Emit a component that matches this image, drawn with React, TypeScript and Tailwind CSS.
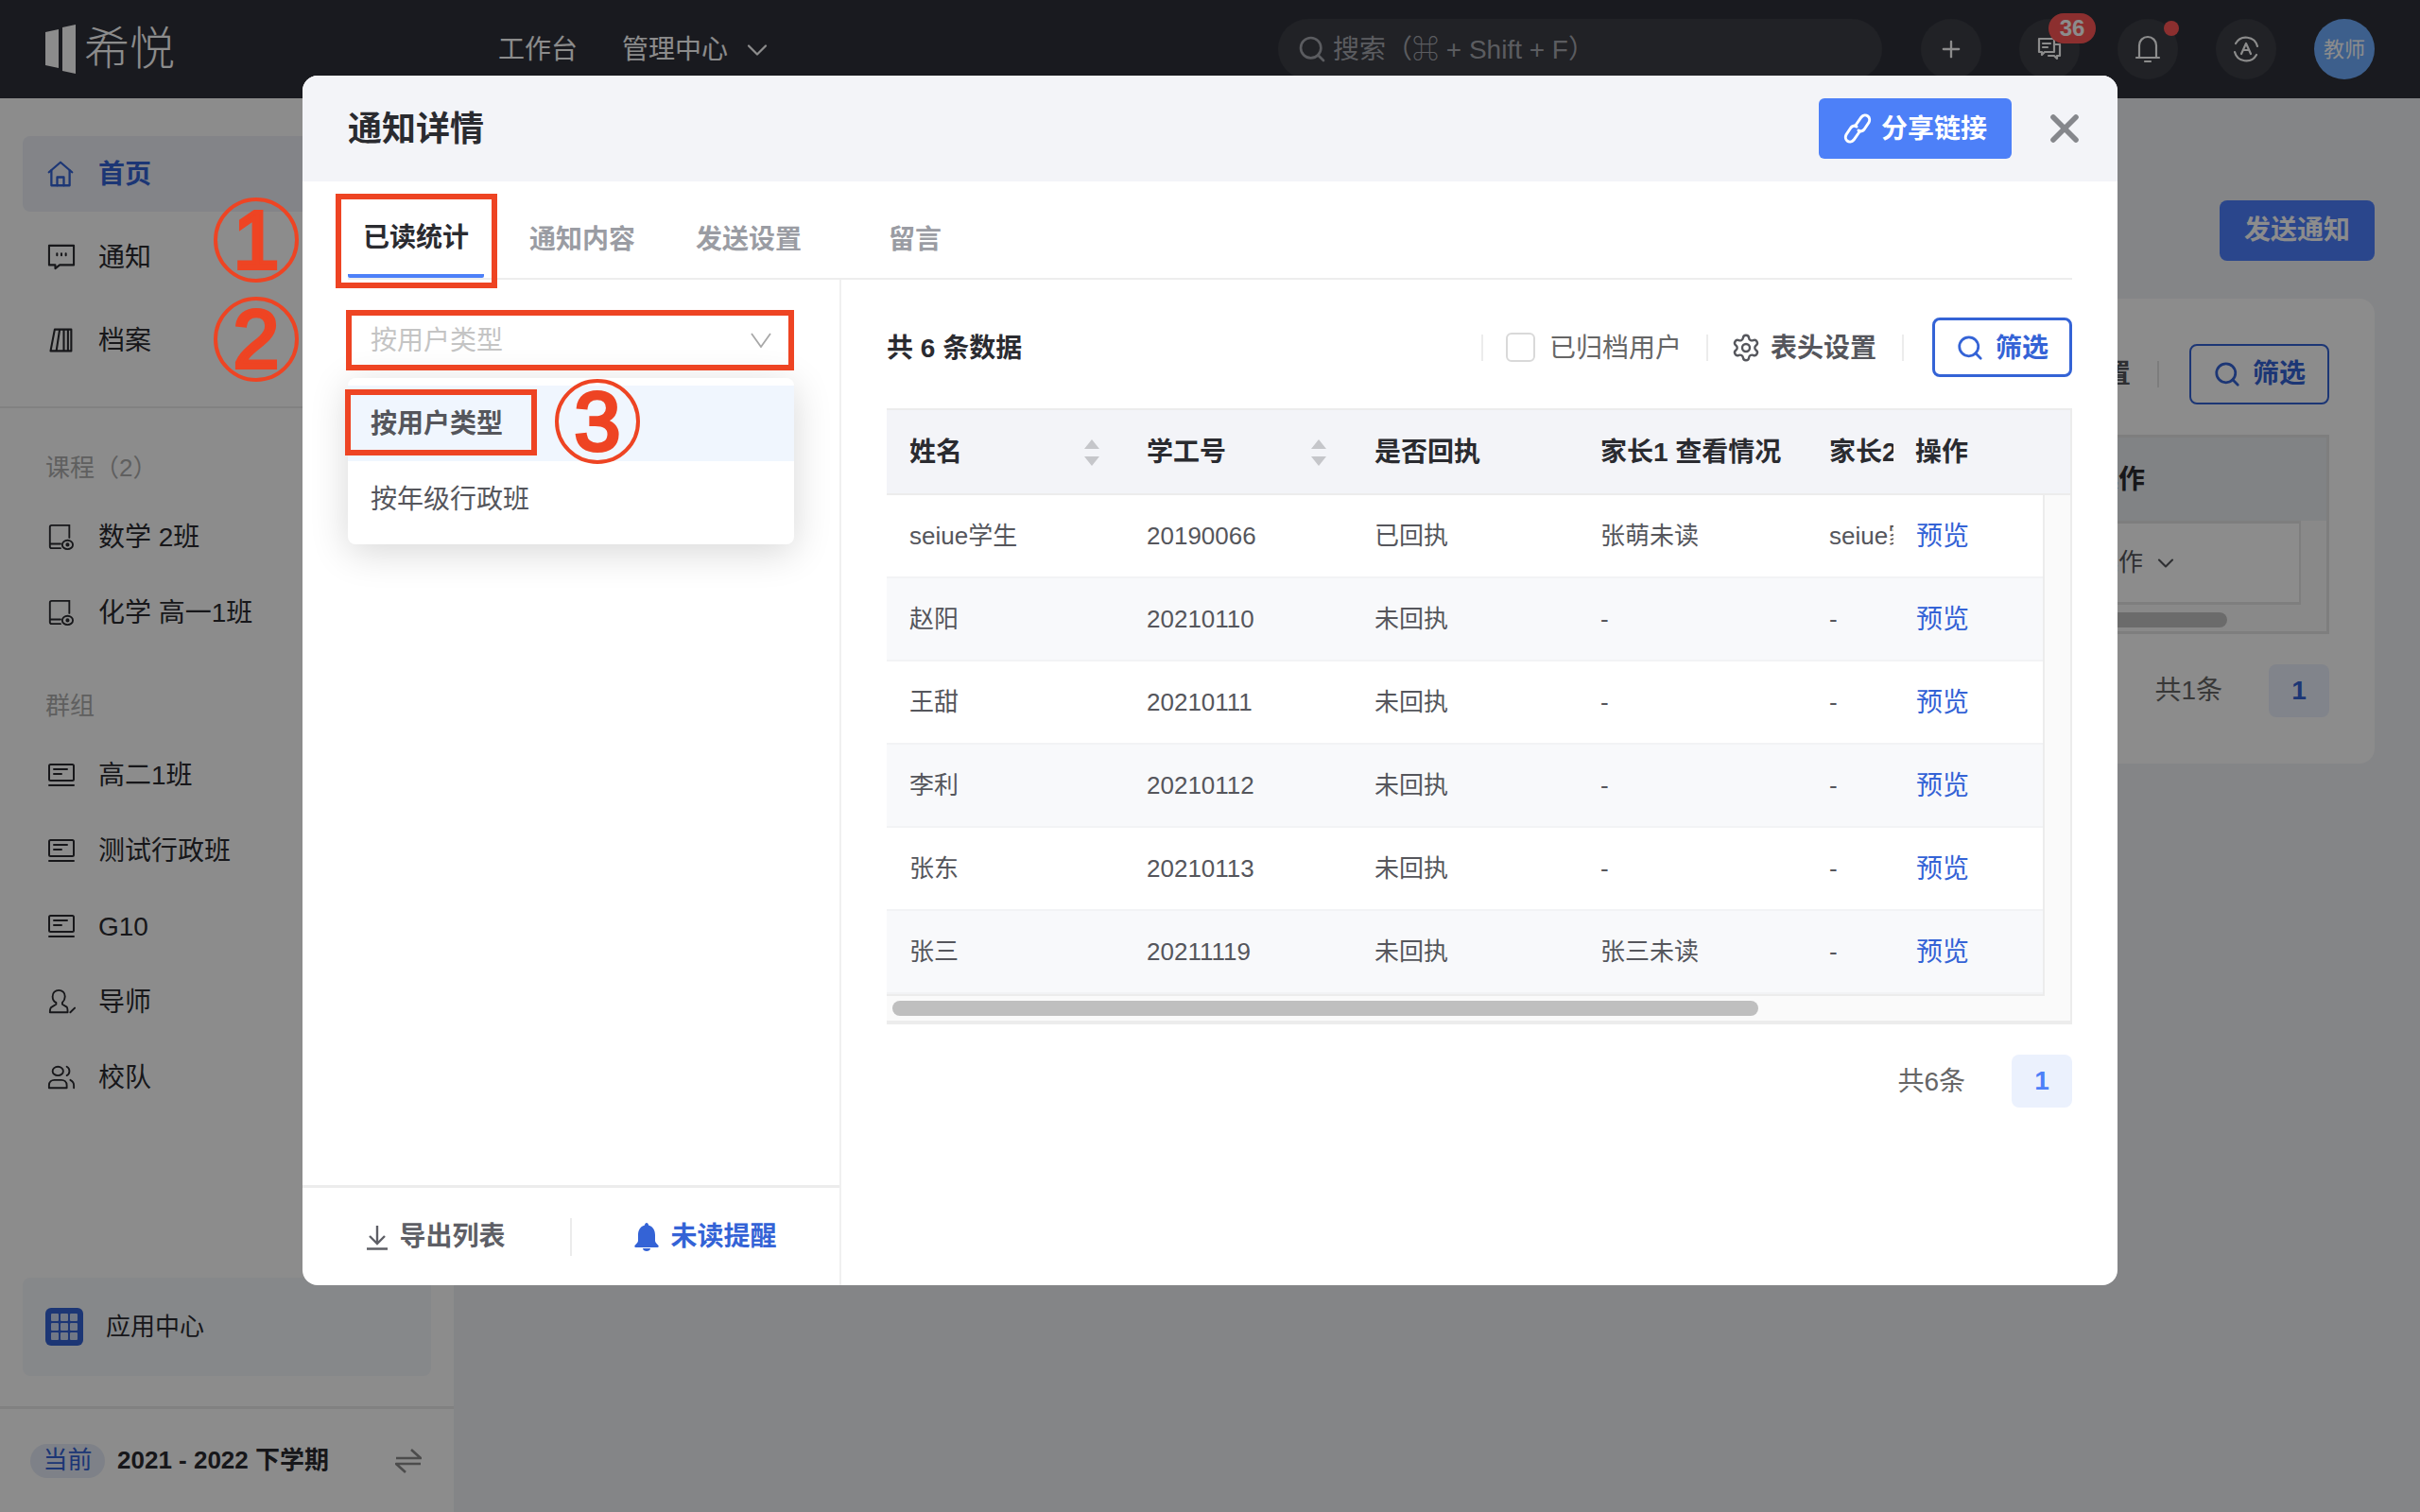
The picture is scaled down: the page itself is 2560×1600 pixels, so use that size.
import React from "react";
import { ChevronDown, Plus, Search, Settings, X } from "lucide-react";

const HomeIcon = () => (
  <svg width="28" height="28" viewBox="0 0 32 32" fill="none" stroke="#3463d6" strokeWidth="2.6" strokeLinejoin="round" strokeLinecap="round">
    <path d="M2 14 16 2l14 12" />
    <path d="M5 12v18h22V12" />
    <path d="M12 30V20h8v10" />
  </svg>
);

const ChatIcon = () => (
  <svg width="30" height="28" viewBox="0 0 32 30" fill="none" stroke="#2a2b30" strokeWidth="2.2" strokeLinejoin="round" strokeLinecap="round">
    <path d="M2 2h28v22H14l-5 4v-4H2z" />
    <path d="M11 11v2M16 11v2M21 11v2" />
  </svg>
);

const ArchiveIcon = () => (
  <svg width="28" height="28" viewBox="0 0 32 32" fill="none" stroke="#2a2b30" strokeWidth="2.4" strokeLinejoin="round">
    <path d="M9 3h20v26H4z" />
    <path d="M15 3l-4 26M20 3v26M25 3v26" />
  </svg>
);

const CourseIcon = () => (
  <svg width="28" height="30" viewBox="0 0 30 32" fill="none" stroke="#2a2b30" strokeWidth="2" strokeLinecap="round">
    <path d="M25 17V3H5a2 2 0 0 0-2 2v22a2 2 0 0 0 2 2h10M3 24h12" />
    <ellipse cx="23" cy="25" rx="6" ry="5" />
    <circle cx="23" cy="25" r="1.2" />
  </svg>
);

const GroupIcon = () => (
  <svg width="30" height="26" viewBox="0 0 30 26" fill="none" stroke="#2a2b30" strokeWidth="2" strokeLinecap="round">
    <rect x="2" y="2" width="26" height="17" rx="1.5" />
    <path d="M7 7h14M7 12h8M2 24h26" />
  </svg>
);

const MentorIcon = () => (
  <svg width="30" height="30" viewBox="0 0 32 32" fill="none" stroke="#2a2b30" strokeWidth="2" strokeLinecap="round" strokeLinejoin="round">
    <path d="M13 3c4 0 7 3 7 7 0 4-2 6-3 7v2l5 3c1 1 1 3 1 6H3c0-3 0-5 2-6l5-3v-2c-2-1-4-3-4-7s3-7 7-7z" />
    <path d="m26 28 5-5" />
  </svg>
);

const TeamIcon = () => (
  <svg width="30" height="30" viewBox="0 0 32 32" fill="none" stroke="#2a2b30" strokeWidth="2" strokeLinecap="round" strokeLinejoin="round">
    <ellipse cx="12" cy="9" rx="6" ry="5" />
    <path d="M2 28v-3c0-4 3-6 6-6h8c3 0 6 2 6 6v3z" />
    <path d="M22 4c2 1 3 3 3 5s-1 4-3 5M26 19c2 1 4 3 4 6v3" />
  </svg>
);

const MsgIcon = () => (
  <svg width="28" height="28" viewBox="0 0 28 28" fill="none" stroke="#fff" strokeWidth="2.2" strokeLinejoin="round" strokeLinecap="round">
    <path d="M3 3h16v14H9l-3 3v-3H3z" />
    <path d="M19 9h6v12h-3v3l-3-3h-6" />
    <path d="M7 8h8M7 12h5" />
  </svg>
);

const BellIcon = () => (
  <svg width="28" height="32" viewBox="0 0 28 32" fill="none" stroke="#fff" strokeWidth="2.2" strokeLinejoin="round" strokeLinecap="round">
    <path d="M5 25V12c0-5 4-9 9-9s9 4 9 9v13" />
    <path d="M2 25h24M11 29h6" />
  </svg>
);

const LangIcon = () => (
  <svg width="30" height="30" viewBox="0 0 30 30" fill="none" stroke="#fff" strokeWidth="2.2" strokeLinejoin="round" strokeLinecap="round">
    <path d="M4 9A12.500 12.500 0 0 1 27 12" />
    <path d="M26 21A12.500 12.500 0 0 1 3 18" />
    <path d="m10 20 5-11 5 11M12 16h6" />
  </svg>
);

const LinkIcon = () => (
  <svg width="30" height="34" viewBox="0 0 30 34" fill="none" stroke="#fff" strokeWidth="3" strokeLinecap="round">
    <path d="M13 13.500 19 5c2-2.500 5-2.500 7-1s2 4.500 1 6.500l-5 7.500c-1.500 2-4 2.500-6 1" />
    <path d="M17 20.500 11 29c-2 2.500-5 2.500-7 1s-2-4.500-1-6.500l5-7.500c1.500-2 4-2.500 6-1" />
  </svg>
);

const SolidBell = () => (
  <svg width="26" height="30" viewBox="0 0 26 30" fill="#3463d6">
    <path d="M13 0c1 0 2 1 2 2.500C20 4 22 8 22 13v6c0 2 2 3 3.500 5 .5 1 0 2-1 2h-23c-1 0-1.500-1-1-2C2 22 4 21 4 19v-6c0-5 2-9 7-10.500C11 1 12 0 13 0z" />
    <path d="M9 27h8c0 2-2 3-4 3s-4-1-4-3z" />
  </svg>
);

const DownloadIcon = () => (
  <svg width="22" height="28" viewBox="0 0 22 28" fill="none" stroke="#5e5f66" strokeWidth="2.4">
    <path d="M11 2v18M3 13l8 8 8-8M0 26.500h22" />
  </svg>
);

const SwapIcon = () => (
  <svg width="28" height="28" viewBox="0 0 28 28" fill="none" stroke="#8a8a8a" strokeWidth="2.6" strokeLinejoin="round">
    <path d="M1 11h26L17 2M27 17H1l10 9" />
  </svg>
);

const SortIcon = () => (
  <svg width="16" height="28" viewBox="0 0 16 28" fill="#c5c6ca">
    <path d="M8 0l8 10H0zM8 28 0 18h16z" />
  </svg>
);

const AppsIcon = () => (
  <div className="grid h-[40px] w-[40px] grid-cols-3 gap-[2px] rounded-[6px] bg-[#3463d6] p-[6px]">
    {Array.from({ length: 9 }).map((_, i) => (
      <span key={i} className="rounded-[1px] bg-[#f5f7fb] opacity-80" />
    ))}
  </div>
);

const NavItem = ({ icon, label, active }: { icon: React.ReactNode; label: string; active?: boolean }) => (
  <div className={`flex h-[80px] items-center rounded-[8px] pl-[24px] text-[28px] ${active ? "bg-[#eef1f8] font-semibold text-[#3463d6]" : "text-[#2a2b30]"}`}>
    <span className="flex w-[56px] items-center pl-[2px]">{icon}</span>
    <span className="pt-[2px]">{label}</span>
  </div>
);

const rows = [
  ["seiue学生", "20190066", "已回执", "张萌未读", "seiue家长"],
  ["赵阳", "20210110", "未回执", "-", "-"],
  ["王甜", "20210111", "未回执", "-", "-"],
  ["李利", "20210112", "未回执", "-", "-"],
  ["张东", "20210113", "未回执", "-", "-"],
  ["张三", "20211119", "未回执", "张三未读", "-"],
];

const Circled = ({ n, className }: { n: number; className: string }) => (
  <div className={`absolute flex h-[90px] w-[90px] items-center justify-center rounded-full border-[4px] border-[#ee4423] text-[88px] leading-none text-[#ee4423] [-webkit-text-stroke:4px_#ee4423] ${className}`}>
    {n}
  </div>
);

const TopBar = () => (
  <header className="flex h-[104px] shrink-0 items-center bg-[#2f313a] pl-[48px] pr-[48px] text-white">
    <svg width="32" height="52" viewBox="0 0 32 52" fill="#fff">
      <path d="M0 8 14 5v41L0 43z" />
      <path d="M18 3 32 0v52l-14-3z" />
    </svg>
    <span className="ml-[9px] text-[48px] font-light leading-none">希悦</span>
    <nav className="ml-[342px] flex items-center pt-[2px] text-[28px]">
      <span>工作台</span>
      <span className="ml-[47px]">管理中心</span>
      <ChevronDown size={36} strokeWidth={1.5} className="ml-[13px]" />
    </nav>
    <div className="ml-auto mr-[41px] flex h-[64px] w-[639px] items-center rounded-full bg-[#3c3e45] pl-[20px] text-[28px] text-[#a6a8af]">
      <Search size={32} strokeWidth={2} />
      <span className="ml-[6px] pt-[2px]">搜索（⌘ + Shift + F）</span>
    </div>
    <div className="flex items-center gap-[40px]">
      <div className="flex h-[64px] w-[64px] items-center justify-center rounded-full bg-[#3c3e45]">
        <Plus size={28} strokeWidth={2} />
      </div>
      <div className="relative flex h-[64px] w-[64px] items-center justify-center rounded-full bg-[#3c3e45]">
        <MsgIcon />
        <span className="absolute left-[31px] top-[-6px] flex h-[32px] w-[50px] items-center justify-center rounded-[16px] bg-[#ff5757] text-[24px] font-semibold">36</span>
      </div>
      <div className="relative flex h-[64px] w-[64px] items-center justify-center rounded-full bg-[#3c3e45]">
        <BellIcon />
        <span className="absolute left-[49px] top-[2px] h-[16px] w-[16px] rounded-full bg-[#ff5757]" />
      </div>
      <div className="flex h-[64px] w-[64px] items-center justify-center rounded-full bg-[#3c3e45]">
        <LangIcon />
      </div>
      <div className="flex h-[64px] w-[64px] items-center justify-center rounded-full bg-[#70aeff] text-[22px]">教师</div>
    </div>
  </header>
);

const Sidebar = () => (
  <aside className="flex w-[480px] shrink-0 flex-col bg-white">
    <div className="flex flex-col gap-[8px] px-[24px] pt-[40px]">
      <NavItem active icon={<HomeIcon />} label="首页" />
      <NavItem icon={<ChatIcon />} label="通知" />
      <NavItem icon={<ArchiveIcon />} label="档案" />
    </div>
    <div className="mt-[30px] border-t-2 border-[#ebebeb]" />
    <div className="px-[24px]">
      <div className="mt-[43px] flex h-[40px] items-center pl-[24px] text-[26px] text-[#aeaeae]">课程（2）</div>
      <div className="mt-[13px]">
        <NavItem icon={<CourseIcon />} label="数学 2班" />
        <NavItem icon={<CourseIcon />} label="化学 高一1班" />
      </div>
      <div className="mt-[39px] flex h-[40px] items-center pl-[24px] text-[26px] text-[#aeaeae]">群组</div>
      <div className="mt-[13px]">
        <NavItem icon={<GroupIcon />} label="高二1班" />
        <NavItem icon={<GroupIcon />} label="测试行政班" />
        <NavItem icon={<GroupIcon />} label="G10" />
        <NavItem icon={<MentorIcon />} label="导师" />
        <NavItem icon={<TeamIcon />} label="校队" />
      </div>
    </div>
    <div className="mt-auto px-[24px]">
      <div className="flex h-[104px] items-center rounded-[8px] bg-[#f5f7fb] pl-[24px] text-[26px] text-[#2a2b30]">
        <AppsIcon />
        <span className="ml-[24px]">应用中心</span>
      </div>
    </div>
    <div className="mt-[32px] flex h-[112px] items-center border-t-[3px] border-[#ebebeb] pl-[32px] pr-[34px]">
      <span className="flex h-[36px] w-[79px] items-center justify-center rounded-full bg-[#e6ebf7] text-[26px] text-[#3463d6]">当前</span>
      <span className="ml-[13px] text-[26px] font-semibold text-[#2a2b30]">2021 - 2022 下学期</span>
      <span className="ml-auto">
        <SwapIcon />
      </span>
    </div>
  </aside>
);

// page behind the dialog, only its right edge shows
const MainArea = () => (
  <main className="flex flex-1 flex-col items-end bg-[#f0f2f6] pr-[48px] pt-[108px]">
    <button className="h-[64px] w-[164px] rounded-[8px] bg-[#4d80ff] text-[28px] font-semibold text-white">发送通知</button>
    <div className="mt-[40px] h-[492px] w-[1984px] rounded-[16px] bg-white p-[48px]">
      <div className="flex items-center justify-end text-[28px] font-semibold text-[#55565c]">
        <span>表头设置</span>
        <span className="ml-[28px] h-[28px] w-[2px] bg-[#e4e4e4]" />
        <button className="ml-[32px] flex h-[64px] w-[148px] items-center justify-center gap-[12px] rounded-[8px] border-2 border-[#3463d6] text-[#3463d6]">
          <Search size={30} strokeWidth={2.2} />
          筛选
        </button>
      </div>
      <div className="mt-[32px] border-b-[3px] border-r-[3px] border-t-[3px] border-[#e6e6e6] bg-[#fafafa]">
        <div className="flex h-[88px] items-center justify-end bg-[#eceef2] pr-[192px] pt-[2px] text-[28px] font-semibold text-[#2a2b30]">操作</div>
        <div className="flex h-[89px] w-[1858px] items-center justify-end border-b-[3px] border-r-2 border-t-[3px] border-[#e6e6e6] bg-white pr-[127px] text-[26px] text-[#55565c]">
          操作
          <ChevronDown size={28} strokeWidth={1.8} className="ml-[10px]" />
        </div>
        <div className="flex h-[28px] items-center pt-[4px]">
          <div className="h-[16px] w-[1780px] rounded-full bg-[#c4c4c4]" />
        </div>
      </div>
      <div className="mt-[32px] flex items-center justify-end text-[28px] text-[#666]">
        共1条
        <span className="ml-[49px] flex h-[56px] w-[64px] items-center justify-center rounded-[8px] bg-[#ebf1fd] font-bold text-[#3463d6]">1</span>
      </div>
    </div>
  </main>
);

const LeftPanel = () => (
  <div className="flex w-[570px] shrink-0 flex-col border-r-2 border-[#f0f0f0]">
    <div className="relative mx-[48px] mt-[34px]">
      <div className="flex h-[60px] items-center justify-between pl-[24px] pr-[24px] text-[28px] text-[#c4c4c4]">
        <span className="pt-[2px]">按用户类型</span>
        <svg width="22" height="16" viewBox="0 0 22 16" fill="none" stroke="#a8a8a8" strokeWidth="1.8">
          <path d="M1 1l10 14L21 1" />
        </svg>
      </div>
      <div className="absolute left-0 top-[70px] w-full rounded-[8px] bg-white py-[8px] text-[28px] shadow-[0_8px_40px_rgba(0,0,0,0.16)]">
        <div className="flex h-[80px] items-center bg-[#f0f6fe] pl-[24px] pt-[2px] font-semibold text-[#55565c]">按用户类型</div>
        <div className="flex h-[80px] items-center pl-[24px] pt-[2px] text-[#55565c]">按年级行政班</div>
      </div>
    </div>
    <div className="mt-auto flex h-[106px] items-center border-t-[3px] border-[#ececec] text-[28px]">
      <div className="flex w-[283px] items-center justify-center gap-[12px] font-semibold text-[#5e5f66]">
        <DownloadIcon />
        导出列表
      </div>
      <span className="h-[40px] w-[2px] bg-[#ececec]" />
      <div className="flex flex-1 items-center justify-center gap-[12px] font-semibold text-[#3463d6]">
        <SolidBell />
        未读提醒
      </div>
    </div>
  </div>
);

const RightPanel = () => (
  <div className="flex-1 px-[48px] pt-[40px]">
    <div className="flex h-[63px] items-center text-[28px]">
      <span className="pt-[2px] font-semibold text-[#2a2b30]">共 6 条数据</span>
      <span className="ml-auto h-[28px] w-[2px] bg-[#ececec]" />
      <span className="ml-[24px] h-[31px] w-[31px] rounded-[6px] border-2 border-[#d9d9d9]" />
      <span className="ml-[15px] pt-[2px] text-[#666]">已归档用户</span>
      <span className="ml-[26px] h-[28px] w-[2px] bg-[#ececec]" />
      <Settings size={32} strokeWidth={1.8} className="ml-[24px] text-[#55565c]" />
      <span className="ml-[10px] pt-[2px] font-semibold text-[#55565c]">表头设置</span>
      <span className="ml-[27px] h-[28px] w-[2px] bg-[#ececec]" />
      <button className="ml-[30px] flex h-[63px] w-[148px] items-center justify-center gap-[12px] rounded-[8px] border-[3px] border-[#3463d6] font-semibold text-[#3463d6]">
        <Search size={30} strokeWidth={2.2} />
        <span className="pt-[2px]">筛选</span>
      </button>
    </div>

    <div className="mt-[33px] border-b-[4px] border-r-2 border-[#ececec] bg-[#fafafa]">
      <div className="grid h-[92px] grid-cols-[251px_241px_239px_242px_92px_1fr] items-center border-y-2 border-[#ececec] bg-[#f3f4f8] pt-[2px] text-[28px] font-semibold text-[#2a2b30]">
        <div className="flex items-center justify-between pl-[24px] pr-[26px]">
          姓名
          <SortIcon />
        </div>
        <div className="flex items-center justify-between pl-[24px] pr-[27px]">
          学工号
          <SortIcon />
        </div>
        <div className="pl-[24px]">是否回执</div>
        <div className="whitespace-nowrap pl-[24px]">家长1 查看情况</div>
        <div className="overflow-hidden whitespace-nowrap pl-[24px]">家长2 查看情况</div>
        <div className="pl-[23px]">操作</div>
      </div>
      <div className="w-[1225px] border-b-2 border-r-2 border-[#ececec]">
        {rows.map((row, i) => (
          <div
            key={row[1]}
            className={`grid h-[88px] grid-cols-[251px_241px_239px_242px_92px_1fr] items-center border-b-2 border-[#f2f3f5] text-[26px] text-[#55565c] ${i % 2 ? "bg-[#f8f9fb]" : "bg-white"}`}
          >
            {row.map((cell, j) => (
              <div key={j} className="overflow-hidden whitespace-nowrap pl-[24px]">
                {cell}
              </div>
            ))}
            <div className="pl-[24px] pt-[2px] text-[28px] text-[#3463d6]">预览</div>
          </div>
        ))}
      </div>
      <div className="flex h-[26px] items-center pl-[6px]">
        <div className="h-[16px] w-[916px] rounded-full bg-[#bfbfbf]" />
      </div>
    </div>

    <div className="mt-[32px] flex items-center justify-end text-[28px] text-[#666]">
      <span className="pt-[2px]">共6条</span>
      <span className="ml-[49px] flex h-[56px] w-[64px] items-center justify-center rounded-[8px] bg-[#ebf1fd] font-bold text-[#4d80f8]">1</span>
    </div>
  </div>
);

export default function App() {
  return (
    <div className="relative flex h-[1600px] w-[2560px] flex-col overflow-hidden [font-family:'Liberation_Sans','Noto_Sans_CJK_SC',sans-serif]">
      <TopBar />
      <div className="flex flex-1">
        <Sidebar />
        <MainArea />
      </div>

      <div className="absolute inset-0 flex justify-center bg-black/45 pt-[80px]">
        <div className="flex h-[1280px] w-[1920px] flex-col rounded-[16px] bg-white">
          <div className="flex h-[112px] shrink-0 items-center rounded-t-[16px] bg-[#f3f4f8] pl-[48px] pr-[32px]">
            <span className="pt-[2px] text-[36px] font-bold text-[#2a2b30]">通知详情</span>
            <button className="ml-auto flex h-[64px] w-[204px] items-center justify-center gap-[10px] rounded-[6px] bg-[#4d80f8] text-[28px] font-bold text-white">
              <LinkIcon />
              <span className="pt-[2px]">分享链接</span>
            </button>
            <X size={48} strokeWidth={2.8} className="ml-[32px] text-[#85878c]" />
          </div>

          <div className="mx-[48px] flex h-[104px] shrink-0 items-end gap-[32px] border-b-[2px] border-[#ededed] text-[28px] font-semibold text-[#9a9ca3]">
            <div className="flex h-[72px] w-[144px] items-center justify-center self-end rounded-b-[2px] border-b-[4px] border-[#4d80f8] pb-[8px] text-[#2a2b30]">已读统计</div>
            <div className="flex h-[72px] items-center px-[16px] pb-[8px]">通知内容</div>
            <div className="flex h-[72px] items-center px-[16px] pb-[8px]">发送设置</div>
            <div className="ml-[28px] flex h-[72px] items-center px-[16px] pb-[8px]">留言</div>
          </div>

          <div className="flex flex-1">
            <LeftPanel />
            <RightPanel />
          </div>
        </div>
      </div>

      {/* red guide marks drawn on top of the screenshot */}
      <div className="pointer-events-none absolute left-[355px] top-[205px] h-[100px] w-[171px] border-[6px] border-[#ee4423]" />
      <div className="pointer-events-none absolute left-[366px] top-[328px] h-[64px] w-[474px] border-[6px] border-[#ee4423]" />
      <div className="pointer-events-none absolute left-[365px] top-[412px] h-[70px] w-[203px] border-[6px] border-[#ee4423]" />
      <Circled n={1} className="left-[226px] top-[209px]" />
      <Circled n={2} className="left-[226px] top-[314px]" />
      <Circled n={3} className="left-[587px] top-[401px]" />
    </div>
  );
}
